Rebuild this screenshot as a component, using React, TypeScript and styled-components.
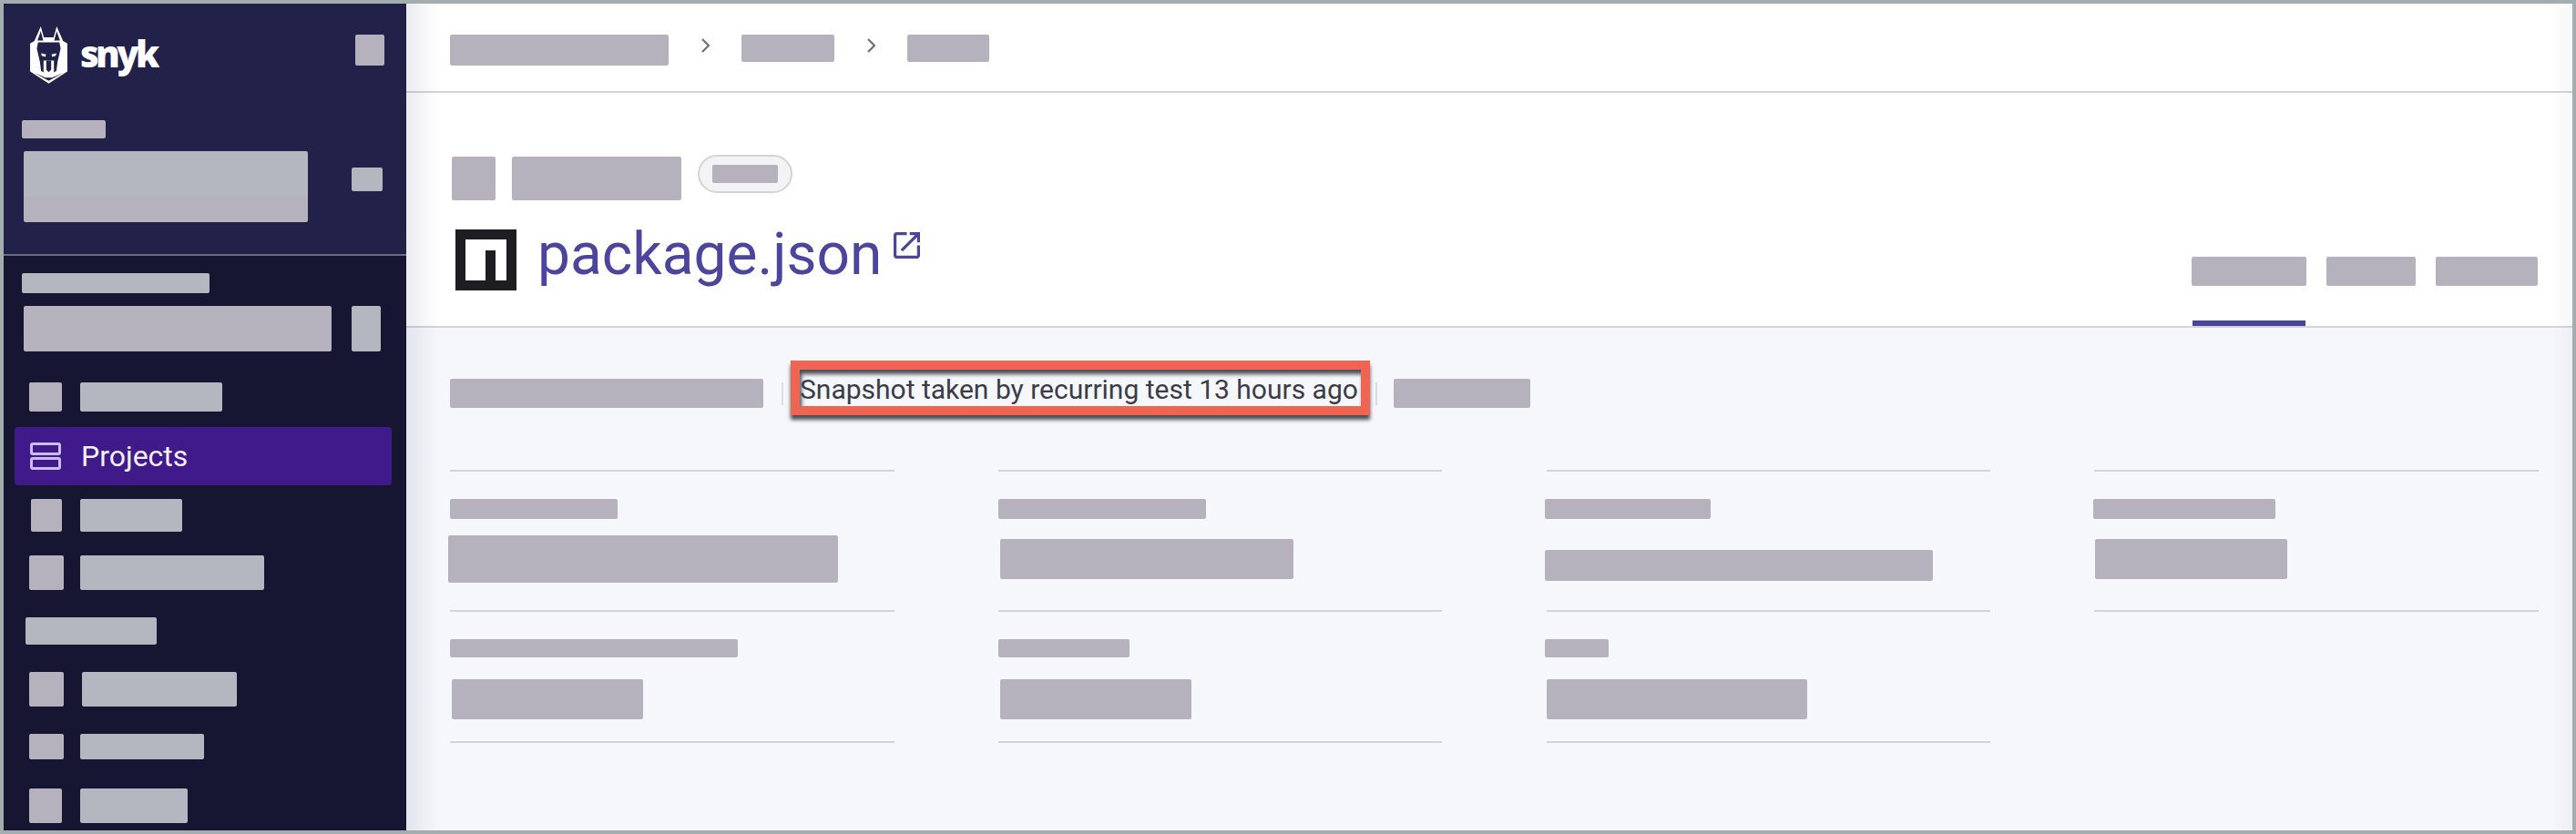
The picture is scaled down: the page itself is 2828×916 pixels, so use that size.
import styled, { createGlobalStyle } from "styled-components";

const GlobalStyle = createGlobalStyle`
  html, body {
    margin: 0;
    padding: 0;
    background: #f5f7fb;
  }
  body {
    font-family: Roboto, "Liberation Sans", sans-serif;
  }
`

const Frame = styled.div`
  box-sizing: border-box;
  width: 2828px;
  height: 916px;
  border: 4px solid #a3adb0;
  display: flex;
  overflow: hidden;
`

const Sidebar = styled.aside`
  width: 442px;
  flex-shrink: 0;
  display: flex;
  flex-direction: column;
  background-color: #161632;
`

const SidebarTop = styled.div`
  box-sizing: border-box;
  height: 277px;
  padding: 25px 24px 0 20px;
  background-color: #212149;
  border-bottom: 2px solid #6b6b7c;
`

const BrandRow = styled.div`
  display: flex;
  justify-content: space-between;
  align-items: flex-start;
  height: 63px;
  padding-left: 9px;
`

const Brand = styled.div`
  display: flex;
  align-items: flex-start;
`

const BrandName = styled.span`
  margin: 2px 0 0 14px;
  font-family: "Open Sans", sans-serif;
  font-size: 40px;
  line-height: 56px;
  font-weight: 800;
  letter-spacing: -3.6px;
  color: #ffffff;
`

const Redacted = styled.div<{ $w: number; $h: number; $tone?: "warm" | "cool"; $top?: number; $x?: number }>`
  flex-shrink: 0;
  width: ${(p) => p.$w}px;
  height: ${(p) => p.$h}px;
  margin-top: ${(p) => p.$top ?? 0}px;
  margin-left: ${(p) => p.$x ?? 0}px;
  border-radius: 2px;
  background-color: ${(p) => (p.$tone === "cool" ? "#b4b7bf" : "#b5b2bd")};
`

const SwitcherRow = styled.div`
  display: flex;
  align-items: flex-start;
  margin: 14px 0 0 2px;
`

const SwitcherBlock = styled.div`
  width: 312px;
  border-radius: 2px;
  overflow: hidden;

  & > div {
    border-radius: 0;
  }
`

const SidebarBody = styled.div`
  padding: 19px 0 0 20px;
`

const SelectRow = styled.div`
  display: flex;
  margin: 14px 0 0 2px;
  gap: 22px;
`

const NavRow = styled.div<{ $top: number; $h: number }>`
  display: grid;
  grid-template-columns: 56px auto;
  justify-content: start;
  height: ${(p) => p.$h}px;
  margin-top: ${(p) => p.$top}px;
  padding-left: 8px;
`

const ActiveNavRow = styled.div`
  box-sizing: border-box;
  width: 414px;
  height: 64px;
  margin: 17px 0 0 -8px;
  padding-left: 17px;
  display: grid;
  grid-template-columns: 56px auto;
  justify-content: start;
  align-items: center;
  border-radius: 4px;
  background-color: #401a8b;
  color: #f4f1fb;
  font-size: 32px;
  line-height: 64px;
`

const Main = styled.main`
  position: relative;
  flex: 1;
  min-width: 0;
  display: flex;
  flex-direction: column;
  background-color: #f5f7fb;

  &::before,
  &::after {
    content: "";
    position: absolute;
    top: 0;
    bottom: 0;
    pointer-events: none;
  }
  &::before {
    left: 0;
    width: 36px;
    background: linear-gradient(90deg, rgba(40, 40, 90, 0.09), rgba(40, 40, 90, 0));
  }
  &::after {
    right: 0;
    width: 24px;
    background: linear-gradient(270deg, rgba(40, 40, 90, 0.04), rgba(40, 40, 90, 0));
  }
`

const Crumbs = styled.nav`
  box-sizing: border-box;
  height: 98px;
  padding: 34px 0 0 48px;
  display: flex;
  align-items: flex-start;
  background-color: #ffffff;
  border-bottom: 2px solid #d3d3d9;
`

const CrumbArrow = styled.svg`
  width: 9px;
  height: 16px;
  margin: 4px 35px 0 36px;
  flex-shrink: 0;
`

const ProjectHead = styled.header`
  box-sizing: border-box;
  height: 258px;
  padding: 68px 38px 0 50px;
  display: flex;
  justify-content: space-between;
  background-color: #ffffff;
  border-bottom: 2px solid #d3d3d9;
`

const MetaRow = styled.div`
  display: flex;
  align-items: flex-start;
  margin-top: 2px;
`

const Pill = styled.div`
  box-sizing: border-box;
  width: 104px;
  height: 42px;
  margin: -2px 0 0 18px;
  display: flex;
  align-items: center;
  justify-content: center;
  border: 2px solid #d3d3d9;
  border-radius: 21px;
  background-color: #f3f3f6;
`

const TitleRow = styled.div`
  display: flex;
  align-items: flex-start;
  margin: 32px 0 0 4px;
`

const NpmLogo = styled.svg`
  width: 67px;
  height: 67px;
  flex-shrink: 0;
`

const Title = styled.h1`
  margin: -6px 0 0 23px;
  font-size: 64px;
  line-height: 68px;
  font-weight: 400;
  color: #4b459d;
`

const OpenIcon = styled.svg`
  width: 29px;
  height: 29px;
  margin: 3px 0 0 13px;
  fill: #4b459d;
`

const Tabs = styled.div`
  display: flex;
  align-self: flex-end;
  gap: 22px;
`

const Tab = styled.div<{ $active?: boolean }>`
  position: relative;
  height: 76px;

  ${(p) =>
    p.$active &&
    `
    &::after {
      content: "";
      position: absolute;
      left: 1px;
      right: 1px;
      bottom: 0;
      height: 6px;
      background-color: #4a4499;
    }
  `}
`

const Content = styled.section`
  flex: 1;
  padding: 36px 37px 0 48px;
`

const StatusRow = styled.div`
  display: flex;
  align-items: flex-start;
  height: 60px;
`

const Sep = styled.span<{ $x?: number }>`
  width: 2px;
  height: 25px;
  margin: 24px 0 0 ${(p) => p.$x ?? 0}px;
  background-color: #dcdce2;
  flex-shrink: 0;
`

const Callout = styled.div`
  box-sizing: border-box;
  width: 636px;
  height: 60px;
  margin: 0 6px 0 8px;
  padding: 3px 0 0 0;
  border: 10px solid #ee6554;
  background-color: #f5f7fb;
  box-shadow: 0 5px 4px rgba(20, 20, 30, 0.75), inset 2px 5px 4px rgba(20, 20, 30, 0.75);
  color: #3c3c49;
  font-size: 30px;
  line-height: 38px;
  white-space: nowrap;
  overflow: hidden;
`

const StatGrid = styled.div`
  display: grid;
  grid-template-columns: repeat(4, 1fr);
  column-gap: 114.33px;
  margin-top: 60px;
`

const StatCell = styled.div<{ $h: number; $closed?: boolean }>`
  box-sizing: border-box;
  height: ${(p) => p.$h}px;
  padding-top: 30px;
  border-top: 2px solid #d3d3d9;
  border-bottom: ${(p) => (p.$closed ? "2px solid #d3d3d9" : "none")};
`

type Stat = { label: number; labelX?: number; value: number; valueX: number; valueH: number; valueTop: number }

const topStats: Stat[] = [
  { label: 184, value: 428, valueX: -2, valueH: 52, valueTop: 18 },
  { label: 228, value: 322, valueX: 2, valueH: 44, valueTop: 22 },
  { label: 182, labelX: -2, value: 426, valueX: -2, valueH: 34, valueTop: 34 },
  { label: 200, labelX: -1, value: 211, valueX: 1, valueH: 44, valueTop: 22 },
]

const bottomStats: Stat[] = [
  { label: 316, value: 210, valueX: 2, valueH: 44, valueTop: 24 },
  { label: 144, value: 210, valueX: 2, valueH: 44, valueTop: 24 },
  { label: 70, labelX: -2, value: 286, valueX: 0, valueH: 44, valueTop: 24 },
]

function SnykMark() {
  return (
    <svg width="41" height="63" viewBox="0 0 122 188" style={{ flexShrink: 0 }}>
      <path fill="#fff" d="M35 0L45 36H77L87 0L108 48L122 56V148L61 187L0 148V56L14 48Z" />
      <path fill="#212149" d="M35 16L24 46H43Z" />
      <path fill="#212149" d="M87 16L98 46H79Z" />
      <path fill="#212149" d="M26 52H96L100 72L90 116L86 146L74 152V116H48V152L36 146L32 116L22 72Z" />
      <path fill="#212149" d="M14 152L50 168H72L108 152L61 178Z" />
      <path fill="#fff" d="M36 88L52 92L50 100L38 96Z" />
      <path fill="#fff" d="M86 88L70 92L72 100L84 96Z" />
      <path fill="#fff" d="M44 112H78V150L68 160H54L44 150Z" />
      <path fill="#212149" d="M53 112H69V142L61 150L53 142Z" />
    </svg>
  )
}

export default function App() {
  return (
    <Frame>
      <GlobalStyle />
      <Sidebar>
        <SidebarTop>
          <BrandRow>
            <Brand>
              <SnykMark />
              <BrandName>snyk</BrandName>
            </Brand>
            <Redacted $w={32} $h={34} $top={9} />
          </BrandRow>
          <Redacted $w={92} $h={20} $top={40} />
          <SwitcherRow>
            <SwitcherBlock>
              <Redacted $w={312} $h={50} $tone="cool" />
              <Redacted $w={312} $h={28} />
            </SwitcherBlock>
            <Redacted $w={34} $h={26} $top={18} $x={48} $tone="cool" />
          </SwitcherRow>
        </SidebarTop>
        <SidebarBody>
          <Redacted $w={206} $h={22} $tone="cool" />
          <SelectRow>
            <Redacted $w={338} $h={50} />
            <Redacted $w={32} $h={50} $tone="cool" />
          </SelectRow>
          <NavRow $top={34} $h={32}>
            <Redacted $w={36} $h={32} />
            <Redacted $w={156} $h={32} $tone="cool" />
          </NavRow>
          <ActiveNavRow>
            <svg width="34" height="30" viewBox="0 0 34 30" fill="none" stroke="#cabfe8" strokeWidth="3">
              <rect x="1.5" y="1.5" width="31" height="11" rx="1.5" />
              <rect x="1.5" y="17.5" width="31" height="11" rx="1.5" />
            </svg>
            <span>Projects</span>
          </ActiveNavRow>
          <NavRow $top={15} $h={36}>
            <Redacted $w={34} $h={36} $x={2} />
            <Redacted $w={112} $h={36} $tone="cool" />
          </NavRow>
          <NavRow $top={26} $h={38}>
            <Redacted $w={38} $h={38} />
            <Redacted $w={202} $h={38} $tone="cool" />
          </NavRow>
          <Redacted $w={144} $h={30} $top={30} $x={4} $tone="cool" />
          <NavRow $top={30} $h={38}>
            <Redacted $w={38} $h={38} />
            <Redacted $w={170} $h={38} $x={2} $tone="cool" />
          </NavRow>
          <NavRow $top={30} $h={28}>
            <Redacted $w={38} $h={28} />
            <Redacted $w={136} $h={28} $tone="cool" />
          </NavRow>
          <NavRow $top={32} $h={38}>
            <Redacted $w={36} $h={38} />
            <Redacted $w={118} $h={38} $tone="cool" />
          </NavRow>
        </SidebarBody>
      </Sidebar>
      <Main>
        <Crumbs>
          <Redacted $w={240} $h={34} />
          <CrumbArrow viewBox="0 0 9 16" fill="none" stroke="#6d6d7e" strokeWidth="2.2">
            <path d="M1 1L8 8L1 15" />
          </CrumbArrow>
          <Redacted $w={102} $h={30} />
          <CrumbArrow viewBox="0 0 9 16" fill="none" stroke="#6d6d7e" strokeWidth="2.2">
            <path d="M1 1L8 8L1 15" />
          </CrumbArrow>
          <Redacted $w={90} $h={30} />
        </Crumbs>
        <ProjectHead>
          <div>
            <MetaRow>
              <Redacted $w={48} $h={48} />
              <Redacted $w={186} $h={48} $x={18} />
              <Pill>
                <Redacted $w={72} $h={20} />
              </Pill>
            </MetaRow>
            <TitleRow>
              <NpmLogo viewBox="0 0 67 67">
                <rect width="67" height="67" fill="#1e1e22" />
                <rect x="11" y="11" width="45" height="45" fill="#fff" />
                <rect x="33" y="23" width="11" height="33" fill="#1e1e22" />
              </NpmLogo>
              <Title>package.json</Title>
              <OpenIcon viewBox="3 3 18 18">
                <path d="M19 19H5V5h7V3H5c-1.11 0-2 .9-2 2v14c0 1.1.89 2 2 2h14c1.1 0 2-.9 2-2v-7h-2v7zM14 3v2h3.59l-9.83 9.83 1.41 1.41L19 6.41V10h2V3h-7z" />
              </OpenIcon>
            </TitleRow>
          </div>
          <Tabs>
            <Tab $active>
              <Redacted $w={126} $h={32} />
            </Tab>
            <Tab>
              <Redacted $w={98} $h={32} />
            </Tab>
            <Tab>
              <Redacted $w={112} $h={32} />
            </Tab>
          </Tabs>
        </ProjectHead>
        <Content>
          <StatusRow>
            <Redacted $w={344} $h={32} $top={20} />
            <Sep $x={20} />
            <Callout>Snapshot taken by recurring test 13 hours ago</Callout>
            <Sep />
            <Redacted $w={150} $h={32} $top={20} $x={18} />
          </StatusRow>
          <StatGrid>
            {topStats.map((s, i) => (
              <StatCell key={i} $h={154}>
                <Redacted $w={s.label} $h={22} $x={s.labelX} />
                <Redacted $w={s.value} $h={s.valueH} $x={s.valueX} $top={s.valueTop} />
              </StatCell>
            ))}
            {bottomStats.map((s, i) => (
              <StatCell key={i} $h={146} $closed>
                <Redacted $w={s.label} $h={20} $x={s.labelX} />
                <Redacted $w={s.value} $h={s.valueH} $x={s.valueX} $top={s.valueTop} />
              </StatCell>
            ))}
            <StatCell $h={146} />
          </StatGrid>
        </Content>
      </Main>
    </Frame>
  )
}
